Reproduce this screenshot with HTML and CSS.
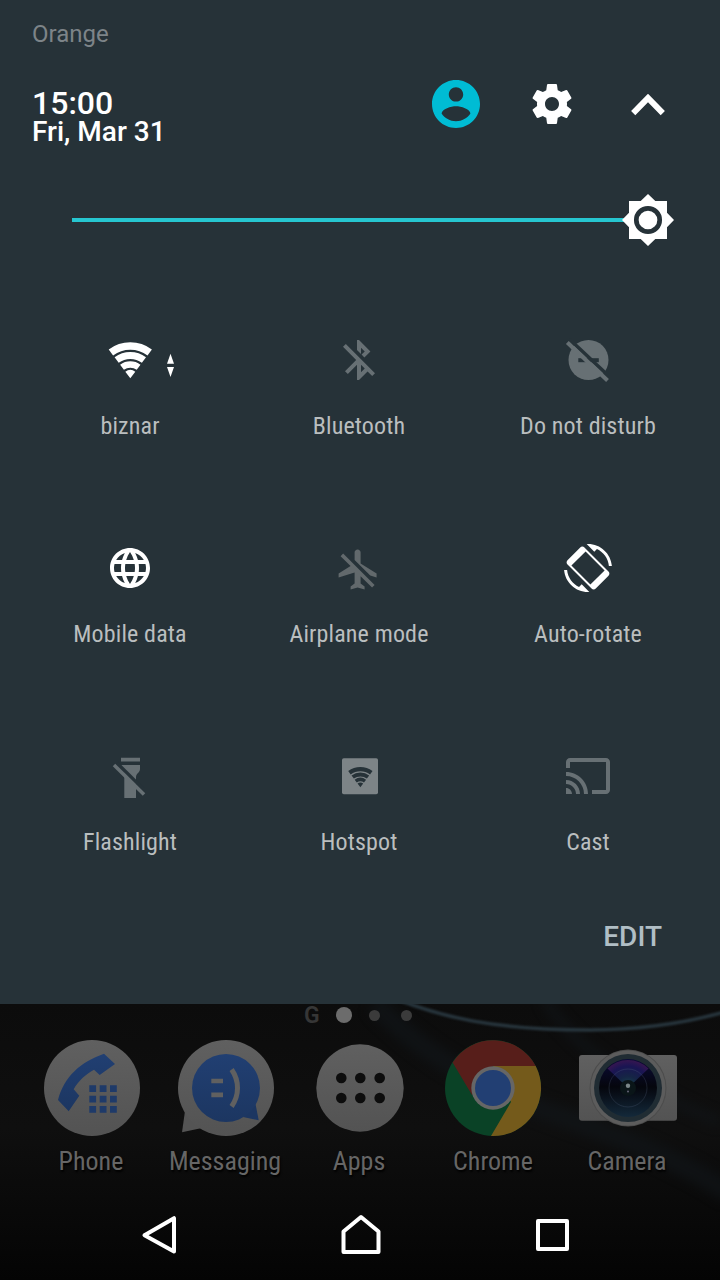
FILE: index.html
```html
<!DOCTYPE html>
<html lang="en">
<head>
    <meta charset="utf-8">
    <title>Quick settings</title>
    <meta name="viewport" content="width=device-width, initial-scale=1" />
    <link rel="stylesheet" href="styles.css">
</head>
<body>
<svg class="defs" width="0" height="0">
    <defs>
        <symbol id="wifi" viewBox="0 0 48 48">
            <path d="M2.7 13.5a36 36 0 0 1 43.2 0l-4.4 5.9a28.6 28.6 0 0 0-34.4 0zM8.6 21.3a26.2 26.2 0 0 1 31.4 0l-4.1 5.5a19.4 19.4 0 0 0-23.2 0zM14.1 28.7a17 17 0 0 1 20.4 0l-3.8 5.1a10.6 10.6 0 0 0-12.8 0zM19.3 35.7a8.3 8.3 0 0 1 10 0l-5 6.6z"/>
        </symbol>
        <linearGradient id="disc" x1="0" y1="0" x2="0" y2="1">
            <stop offset="0" stop-color="#606060"/>
            <stop offset="1" stop-color="#535353"/>
        </linearGradient>
        <linearGradient id="blue" x1="0" y1="0" x2="0" y2="1">
            <stop offset="0" stop-color="#213f72"/>
            <stop offset="1" stop-color="#1c3661"/>
        </linearGradient>
    </defs>
</svg>

<section class="panel">
    <div class="carrier">Orange</div>
    <header>
        <div class="datetime">
            <div class="clock">15:00</div>
            <div class="date">Fri, Mar 31</div>
        </div>
        <div class="actions">
            <svg class="user" viewBox="2 2 20 20"><path d="M12 2C6.48 2 2 6.48 2 12s4.48 10 10 10 10-4.48 10-10S17.52 2 12 2zm0 3c1.66 0 3 1.34 3 3s-1.34 3-3 3-3-1.34-3-3 1.34-3 3-3zm0 14.2c-2.5 0-4.71-1.28-6-3.22.03-1.99 4-3.08 6-3.08 1.99 0 5.97 1.09 6 3.08-1.29 1.94-3.5 3.22-6 3.22z"/></svg>
            <svg viewBox="0 0 24 24"><path d="M19.43 12.98c.04-.32.07-.64.07-.98s-.03-.66-.07-.98l2.11-1.65c.19-.15.24-.42.12-.64l-2-3.46c-.12-.22-.39-.3-.61-.22l-2.49 1c-.52-.4-1.08-.73-1.69-.98l-.38-2.65C14.46 2.18 14.25 2 14 2h-4c-.25 0-.46.18-.49.42l-.38 2.65c-.61.25-1.17.59-1.69.98l-2.49-1c-.23-.09-.49 0-.61.22l-2 3.46c-.13.22-.07.49.12.64l2.11 1.65c-.04.32-.07.65-.07.98s.03.66.07.98l-2.11 1.65c-.19.15-.24.42-.12.64l2 3.46c.12.22.39.3.61.22l2.49-1c.52.4 1.08.73 1.69.98l.38 2.65c.03.24.24.42.49.42h4c.25 0 .46-.18.49-.42l.38-2.65c.61-.25 1.17-.59 1.69-.98l2.49 1c.23.09.49 0 .61-.22l2-3.46c.12-.22.07-.49-.12-.64l-2.11-1.65zM12 15.5c-1.93 0-3.5-1.57-3.5-3.5s1.57-3.5 3.5-3.5 3.5 1.57 3.5 3.5-1.57 3.5-3.5 3.5z"/></svg>
            <svg viewBox="0 0 48 48"><path d="M24 13.7l16.9 17.2-4.2 4.3L24 22.3 11.3 35.2l-4.2-4.3z"/></svg>
        </div>
    </header>

    <div class="brightness">
        <div class="track"></div>
        <svg viewBox="0 0 52 52">
            <path d="M26 0l7.3 7H45v11.700L52 26l-7 7.300V45H33.300L26 52l-7.300-7H7V33.300L0 26l7-7.300V7h11.700z"/>
            <circle cx="26" cy="26" r="11.700" class="ring"/>
        </svg>
    </div>

    <div class="tiles">
        <div class="tile on">
            <svg viewBox="0 0 48 48">
                <use href="#wifi" width="48" height="48"/>
                <path d="M64.500 17.700l3.500 10h-7zM61 31h7l-3.500 10z"/>
            </svg>
            <span>biznar</span>
        </div>
        <div class="tile">
            <svg viewBox="0 0 24 24"><path d="M13 5.830l1.880 1.880-1.600 1.600 1.410 1.410 3.020-3.020L12 2h-1v5.030l2 2v-3.200zM5.410 4L4 5.410 10.590 12 5 17.590 6.410 19 11 14.410V22h1l4.290-4.290 2.300 2.290L20 18.590 5.410 4zM13 18.170v-3.760l1.880 1.880L13 18.170z"/></svg>
            <span>Bluetooth</span>
        </div>
        <div class="tile">
            <svg viewBox="0 0 48 48">
                <circle cx="24.500" cy="24" r="20"/>
                <path class="cut" d="M14.300 22.200h20.500v4H14.300z"/>
                <path class="cut-line thin" d="M5.500 3.200l40.500 38"/>
                <path class="slash" d="M3.300 6.500l40.200 38"/>
            </svg>
            <span>Do not disturb</span>
        </div>
        <div class="tile on">
            <svg viewBox="0 0 24 24"><path d="M11.990 2C6.470 2 2 6.480 2 12s4.470 10 9.990 10C17.520 22 22 17.520 22 12S17.520 2 11.990 2zm6.930 6h-2.950c-.32-1.250-.78-2.450-1.380-3.560 1.840.63 3.370 1.910 4.330 3.560zM12 4.040c.83 1.200 1.480 2.530 1.910 3.960h-3.820c.43-1.430 1.080-2.760 1.910-3.960zM4.260 14C4.100 13.360 4 12.690 4 12s.1-1.360.26-2h3.380c-.08.66-.14 1.320-.14 2 0 .68.06 1.340.14 2H4.260zm.82 2h2.950c.32 1.250.78 2.450 1.380 3.560-1.840-.63-3.370-1.900-4.330-3.560zm2.950-8H5.080c.96-1.660 2.490-2.930 4.330-3.560C8.810 5.550 8.350 6.750 8.030 8zM12 19.960c-.83-1.200-1.480-2.530-1.910-3.960h3.820c-.43 1.430-1.080 2.760-1.910 3.960zM14.340 14H9.660c-.09-.66-.16-1.320-.16-2 0-.68.07-1.350.16-2h4.680c.09.65.16 1.320.16 2 0 .68-.07 1.340-.16 2zm.25 5.560c.6-1.110 1.060-2.310 1.380-3.560h2.950c-.96 1.650-2.490 2.930-4.330 3.560zM16.360 14c.08-.66.14-1.320.14-2 0-.68-.06-1.340-.14-2h3.380c.16.640.26 1.310.26 2s-.1 1.360-.26 2h-3.380z"/></svg>
            <span>Mobile data</span>
        </div>
        <div class="tile">
            <svg class="airplane" viewBox="0.200 -0.800 24 24"><path d="M13 9V3.500c0-.83-.67-1.500-1.500-1.500S10 2.670 10 3.500v3.680l7.830 7.830L21 16v-2l-8-5zM3 5.270l4.990 4.990L2 14v2l8-2.500V19l-2 1.500V22l3.500-1 3.500 1v-1.500L13 19v-3.730L18.730 21 20 19.730 4.270 4 3 5.270z"/></svg>
            <span>Airplane mode</span>
        </div>
        <div class="tile on">
            <svg viewBox="0 0 24 24">
                <path d="M16.480 2.520c3.270 1.550 5.610 4.720 5.970 8.480h1.500C23.440 4.840 18.290 0 12 0l-.66.03 3.810 3.810 1.330-1.320zM7.520 21.480C4.250 19.940 1.910 16.760 1.550 13H.05C.56 19.160 5.710 24 12 24l.66-.03-3.810-3.810-1.330 1.320z"/>
                <path fill-rule="evenodd" d="M10.230 1.750c-.59-.59-1.540-.59-2.120 0L1.750 8.110c-.59.59-.59 1.540 0 2.120l12.020 12.020c.59.59 1.540.59 2.120 0l6.360-6.360c.59-.59.59-1.540 0-2.120zM10.800 3.700L20.300 13.200 13.200 20.300 3.700 10.800z"/>
            </svg>
            <span>Auto-rotate</span>
        </div>
        <div class="tile">
            <svg viewBox="0 0 48 48">
                <path d="M15 5.800h19v3.700H15zM15 13h19v4c0 3.500-4 4.500-4 8v21H18.300V20z"/>
                <path class="cut-line thin" d="M11 11.100l26 26"/>
                <path class="slash thin" d="M8 13l30 29.500"/>
            </svg>
            <span>Flashlight</span>
        </div>
        <div class="tile hotspot">
            <svg viewBox="0 0 48 48">
                <rect x="7" y="6.300" width="36" height="36" rx="1.800"/>
                <use class="cut" href="#wifi" x="11.700" y="11.500" width="27" height="27"/>
            </svg>
            <span>Hotspot</span>
        </div>
        <div class="tile">
            <svg viewBox="0 0 24 24"><path d="M21 3H3c-1.100 0-2 .9-2 2v3h2V5h18v14h-7v2h7c1.100 0 2-.9 2-2V5c0-1.100-.9-2-2-2zM1 18v3h3c0-1.660-1.340-3-3-3zm0-4v2c2.760 0 5 2.240 5 5h2c0-3.870-3.130-7-7-7zm0-4v2c4.970 0 9 4.030 9 9h2c0-6.080-4.930-11-11-11z"/></svg>
            <span>Cast</span>
        </div>
    </div>
    <div class="edit">EDIT</div>
</section>

<section class="home">
    <svg class="wallpaper" viewBox="0 0 720 276">
        <defs>
            <filter id="soft" x="-20%" y="-50%" width="140%" height="200%" color-interpolation-filters="sRGB"><feGaussianBlur stdDeviation="1"/></filter>
            <filter id="haze" x="-20%" y="-50%" width="140%" height="200%" color-interpolation-filters="sRGB"><feGaussianBlur stdDeviation="6"/></filter>
        </defs>
        <path class="trail" d="M375 0Q440 70 560 112T730 190" stroke-width="20" filter="url(#haze)"/>
        <path class="trail" d="M545 -5Q580 60 720 118" stroke-width="10" filter="url(#haze)"/>
        <path d="M396 -5C440 12 490 26 590 26 640 26 685 19 725 8" stroke="#28363e" stroke-width="3.500" filter="url(#soft)"/>
    </svg>
    <div class="pages">
        <span class="g">G</span><i class="current"></i><i></i><i></i>
    </div>
    <div class="dock">
        <div class="app">
            <svg viewBox="0 0 96 96">
                <circle cx="48" cy="48" r="48" fill="url(#disc)"/>
                <path fill="url(#blue)" d="M60 13.700L71 24 55.700 35 50 29.700C42 34 34 41 29.700 49.300L35.300 55.700 24.700 71.300 14 60C20 37 36 22 60 13.700z"/>
                <path fill="#1e3a69" d="M45.300 45.300h6.800v6.800h-6.800zM55.700 45.300h6.800v6.800h-6.800zM66 45.300h6.800v6.800H66zM45.300 55.700h6.800v6.800h-6.800zM55.700 55.700h6.800v6.800h-6.800zM66 55.700h6.800v6.800H66zM45.300 66h6.800v6.800h-6.800zM55.700 66h6.800v6.800h-6.800zM66 66h6.800v6.800H66z"/>
            </svg>
            <span>Phone</span>
        </div>
        <div class="app">
            <svg viewBox="0 0 96 96">
                <path fill="#545454" d="M7 71L4 92.300l20-4.300z"/>
                <circle cx="48" cy="48" r="48" fill="url(#disc)"/>
                <path fill="#1c3661" d="M77.500 64l3.200 16.300L65 77z"/>
                <circle cx="48" cy="48" r="34" fill="url(#blue)"/>
                <path fill="#606060" d="M33.300 38.700H45v4.600H33.300zM33.300 52.600H45v4.600H33.300z"/>
                <path fill="none" stroke="#606060" stroke-width="5" d="M53.600 29.500Q59.500 38 59.500 48T53.600 66.500"/>
            </svg>
            <span>Messaging</span>
        </div>
        <div class="app">
            <svg viewBox="0 0 96 96">
                <circle cx="48" cy="48" r="43.700" fill="url(#disc)"/>
                <g fill="#0d0d0d">
                    <circle cx="29.300" cy="38" r="5.300"/>
                    <circle cx="48.300" cy="38" r="5.300"/>
                    <circle cx="67.700" cy="38" r="5.300"/>
                    <circle cx="29.300" cy="58" r="5.300"/>
                    <circle cx="48.300" cy="58" r="5.300"/>
                    <circle cx="67.700" cy="58" r="5.300"/>
                </g>
            </svg>
            <span>Apps</span>
        </div>
        <div class="app chrome">
            <svg viewBox="0 0 96 96">
                <circle cx="48" cy="48" r="48" fill="#0a4226"/>
                <path fill="#745a1b" d="M48 26h42.700A48 48 0 0 1 46 96L66 62z"/>
                <path fill="#571e1a" d="M7.600 22.500A48 48 0 0 1 90.700 26H48L27 55z"/>
                <circle cx="48" cy="48" r="21.700" fill="#666"/>
                <circle cx="48" cy="48" r="18" fill="#223f73"/>
            </svg>
            <span>Chrome</span>
        </div>
        <div class="app">
            <svg viewBox="0 0 96 96">
                <defs>
                    <radialGradient id="wedge" cx="48" cy="48" r="29" gradientUnits="userSpaceOnUse">
                        <stop offset="0" stop-color="#1b4a50"/>
                        <stop offset=".4" stop-color="#152545"/>
                        <stop offset=".75" stop-color="#1a1553"/>
                        <stop offset="1" stop-color="#3a1650"/>
                    </radialGradient>
                    <linearGradient id="lens" x1="0" y1="0" x2="0" y2="1">
                        <stop offset="0" stop-color="#0a0b38"/>
                        <stop offset=".48" stop-color="#05060d"/>
                        <stop offset="1" stop-color="#14293a"/>
                    </linearGradient>
                </defs>
                <rect x="-1" y="15" width="98" height="65.700" rx="3" fill="url(#disc)"/>
                <circle cx="48" cy="48" r="38.500" fill="#4c4c4c"/>
                <circle cx="48" cy="48" r="37.500" fill="#5c5c5c"/>
                <circle cx="48" cy="48" r="34" fill="#202c33"/>
                <circle cx="48" cy="48" r="29" fill="url(#lens)"/>
                <path fill="url(#wedge)" d="M48 48L27.500 28.500a29 29 0 0 1 41 0z"/>
                <circle cx="48" cy="48" r="19" fill="none" stroke="#5b6b88" stroke-opacity=".25"/>
                <circle cx="48" cy="48" r="8" fill="#0a1518"/>
                <circle cx="48" cy="45.700" r="2.200" fill="#7a8688"/>
                <circle cx="48" cy="51.500" r="1" fill="#667"/>
            </svg>
            <span>Camera</span>
        </div>
    </div>
    <nav>
        <svg viewBox="0 0 48 48"><path d="M8.500 24.300L38 7.200v33.400z"/></svg>
        <svg viewBox="0 0 48 48"><path d="M24 6L41.500 20.500V41h-35V20.500z"/></svg>
        <svg viewBox="0 0 48 48"><path d="M10 10h29v28H10z"/></svg>
    </nav>
</section>
</body>
</html>
```
FILE: styles.css
```css
* {
    box-sizing: border-box;
}

body {
    margin: 0;
    width: 720px;
    height: 1280px;
    overflow: hidden;
    background: #0b0b0b;
    font-family: Roboto, "Liberation Sans", sans-serif;
}

svg {
    display: block;
    flex: none;
    overflow: visible;
}

.defs {
    position: absolute;
}

.panel {
    height: 1004px;
    padding-top: 20px;
    background: #263238;
    color: #fff;
}

.carrier {
    padding-left: 32px;
    height: 28px;
    line-height: 28px;
    font-size: 24px;
    color: #7d8488;
}

header {
    display: flex;
    justify-content: space-between;
    height: 112px;
    padding: 32px 48px 0 32px;
}

.datetime {
    padding-top: 6px;
    font-weight: 500;
}

.clock {
    height: 32px;
    line-height: 34px;
    font-size: 32px;
}

.date {
    line-height: 28px;
    font-size: 28px;
}

.actions {
    display: flex;
    gap: 48px;
}

.actions svg {
    width: 48px;
    height: 48px;
    fill: #fff;
}

.actions .user {
    fill: #00bcd4;
}

.brightness {
    display: flex;
    align-items: center;
    height: 120px;
    padding: 0 46px 0 72px;
}

.track {
    flex: 1;
    height: 4px;
    margin-right: -4px;
    background: #26c6d0;
}

.brightness svg {
    width: 52px;
    height: 52px;
    fill: #fff;
}

.ring {
    fill: none;
    stroke: #263238;
    stroke-width: 4.7;
}

.tiles {
    display: grid;
    grid-template-columns: repeat(3, 229px);
    grid-auto-rows: 208px;
    height: 641px;
    padding: 56px 0 0 15.5px;
}

.tile {
    display: flex;
    flex-direction: column;
    align-items: center;
    gap: 26px;
    fill: #677074;
}

.tile svg {
    width: 48px;
    height: 48px;
}

.tile span {
    font-family: "Roboto Condensed", Roboto, sans-serif;
    font-stretch: condensed;
    font-size: 24px;
    line-height: 32px;
    letter-spacing: .15px;
    color: #babebf;
    white-space: nowrap;
}

.tile.on {
    fill: #fff;
}

.tile .airplane {
    fill: #62696c;
}

.hotspot {
    fill: #7d8487;
}

.cut {
    fill: #263238;
}

.cut-line {
    stroke: #263238;
}

.slash {
    stroke: #677074;
    stroke-width: 4;
}

.thin {
    stroke-width: 3.5;
}

.edit {
    padding-right: 58px;
    text-align: right;
    font-size: 28px;
    line-height: 32px;
    font-weight: 500;
    color: #b0bec5;
}

.home {
    position: relative;
    height: 276px;
    background: linear-gradient(#0c0c0c, #0f0f0f 45%, #090909 75%, #040404);
}

/* keeps the blurred light trails below the panel edge */
.wallpaper {
    position: absolute;
    inset: 0;
    overflow: hidden;
    fill: none;
}

.trail {
    stroke: #12171b;
    opacity: .6;
}

.pages {
    position: relative;
    display: flex;
    align-items: center;
    height: 22px;
    padding-left: 304px;
}

.pages .g {
    width: 32px;
    padding-top: 2px;
    font-weight: 600;
    font-size: 23px;
    line-height: 22px;
    color: #363636;
}

.pages i {
    width: 11px;
    height: 11px;
    margin-right: 21px;
    border-radius: 50%;
    background: #3b3b3b;
}

.pages .current {
    width: 16px;
    height: 16px;
    margin-right: 17px;
    background: #6c6c6c;
}

.dock {
    position: relative;
    display: grid;
    grid-template-columns: repeat(5, 134px);
    padding: 14px 0 0 25px;
}

.app {
    display: flex;
    flex-direction: column;
    align-items: center;
    gap: 9px;
}

.app svg {
    width: 96px;
    height: 96px;
}

.app span {
    margin-right: 2px;
    font-family: "Roboto Condensed", Roboto, sans-serif;
    font-stretch: condensed;
    font-size: 26px;
    line-height: 32px;
    color: #666;
    text-shadow: 1px 2px 2px #000;
}

.app.chrome svg {
    margin-left: -2px;
}

nav {
    position: relative;
    display: flex;
    gap: 144px;
    padding: 34px 0 0 136px;
}

nav svg {
    width: 48px;
    height: 48px;
    fill: none;
    stroke: #fff;
    stroke-width: 4;
    stroke-linejoin: round;
}

nav svg:nth-child(2) {
    margin: 0 -.5px 0 8.5px;
}
```
